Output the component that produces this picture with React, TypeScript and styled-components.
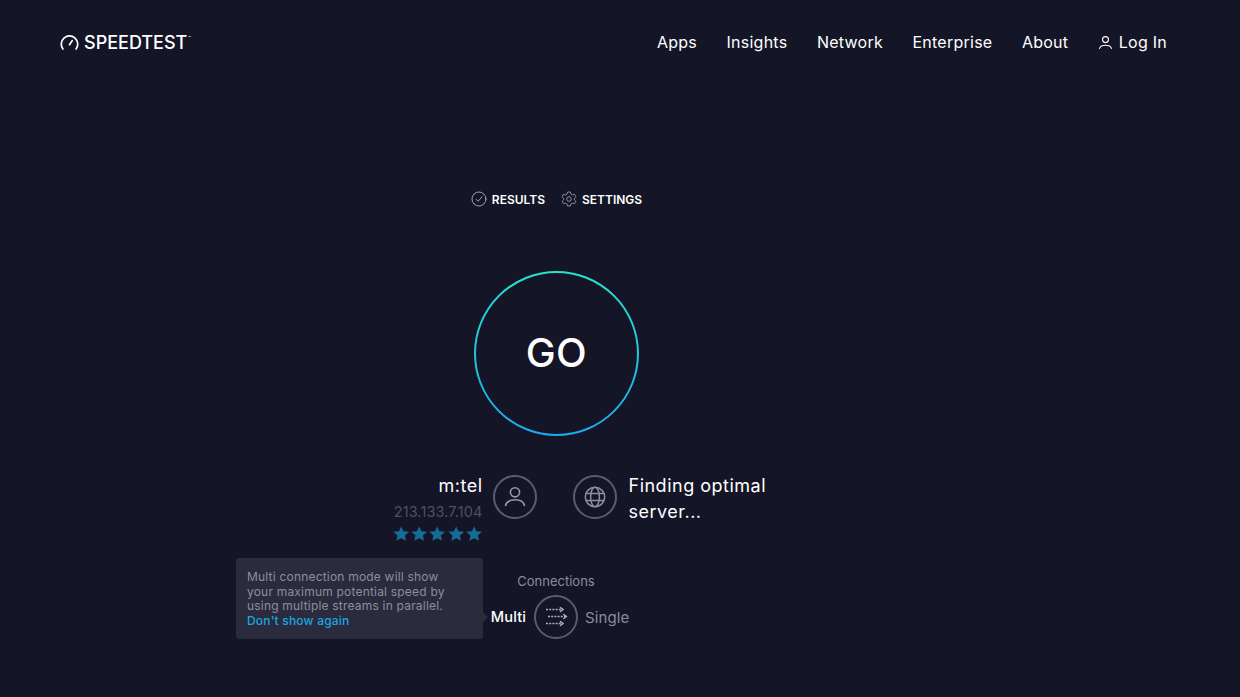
import React from 'react';
import styled, { createGlobalStyle } from 'styled-components';

const GlobalStyle = createGlobalStyle`
  html, body {
    margin: 0;
    padding: 0;
    height: 100%;
    background: #141526;
    overflow: hidden;
  }
  body {
    font-family: 'Inter', 'Liberation Sans', sans-serif;
    color: #fff;
  }
`;

const Page = styled.div`
  height: 697px;
  background: #141526;
`;

const Header = styled.header`
  height: 84px;
  padding: 0 73px 0 60px;
  display: flex;
  align-items: center;
  justify-content: space-between;
`;

const Logo = styled.a`
  display: flex;
  align-items: center;
  gap: 5px;
  color: #fff;
  font-size: 18px;
  font-weight: 500;
`;

const Trademark = styled.sup`
  font-size: 4px;
  margin-left: 1px;
  position: relative;
  top: -3px;
`;

const Nav = styled.nav`
  display: flex;
  align-items: center;
  gap: 29.5px;
`;

const NavLink = styled.a`
  display: flex;
  align-items: center;
  gap: 6px;
  color: #fff;
  font-size: 16px;
  font-weight: 400;
  letter-spacing: 0.25px;
`;

const Main = styled.main`
  width: 1112px;
  display: flex;
  flex-direction: column;
  align-items: center;
  padding-top: 105px;
`;

const Tabs = styled.div`
  height: 20px;
  margin-left: 1px;
  display: flex;
  align-items: center;
  gap: 16px;
`;

const Tab = styled.div`
  display: flex;
  align-items: center;
  gap: 5px;
  font-size: 12px;
  font-weight: 600;
  color: #fff;
`;

const GoButton = styled.button`
  position: relative;
  width: 165px;
  height: 165px;
  margin: 62px 0 0 1px;
  padding: 0 0 2px;
  border: 0;
  background: none;
  color: #fff;
  font-family: inherit;
  font-size: 40px;
  font-weight: 500;
  letter-spacing: 0.5px;
  display: flex;
  align-items: center;
  justify-content: center;
`;

const Ring = styled.svg`
  position: absolute;
  inset: 0;
`;

const InfoRow = styled.div`
  margin: 39px 0 0 -3px;
  display: grid;
  grid-template-columns: 240px 240px;
  column-gap: 36px;
`;

const InfoSide = styled.div<{ $right?: boolean }>`
  display: flex;
  align-items: flex-start;
  gap: 11px;
  justify-content: ${({ $right }) => ($right ? 'flex-start' : 'flex-end')};
`;

const IconCircle = styled.div`
  flex: none;
  width: 44px;
  height: 44px;
  box-sizing: border-box;
  border: 2px solid #5c5d6b;
  border-radius: 50%;
  display: flex;
  align-items: center;
  justify-content: center;
`;

const IspBlock = styled.div`
  display: flex;
  flex-direction: column;
  align-items: flex-end;
  margin: -2px -1px 0 0;
`;

const InfoTitle = styled.div`
  font-size: 18px;
  line-height: 26px;
  letter-spacing: 0.5px;
  font-weight: 400;
  color: #fff;
`;

const IpAddress = styled.div`
  font-size: 14.5px;
  line-height: 18px;
  letter-spacing: 0.1px;
  margin-top: 4px;
  color: #4f5060;
`;

const Stars = styled.div`
  display: flex;
  gap: 2px;
  margin-top: 5px;
  color: #166c97;
`;

const ServerText = styled.div`
  width: 150px;
  margin: -2px 0 0 1px;
  font-size: 18px;
  line-height: 26px;
  letter-spacing: 0.5px;
  color: #fff;
`;

const Connections = styled.div`
  position: relative;
  margin-top: 32px;
  width: 240px;
  display: flex;
  flex-direction: column;
  align-items: center;
`;

const ConnectionsLabel = styled.div`
  font-size: 13px;
  line-height: 16px;
  color: #8b8c9e;
`;

const Toggle = styled.div`
  margin-top: 6px;
  display: grid;
  grid-template-columns: 1fr auto 1fr;
  column-gap: 8px;
  align-items: center;
  width: 100%;
`;

const ToggleLabel = styled.div<{ $active?: boolean; $right?: boolean }>`
  font-size: ${({ $active }) => ($active ? '14.6px' : '15px')};
  letter-spacing: 0.1px;
  font-weight: ${({ $active }) => ($active ? 500 : 400)};
  color: ${({ $active }) => ($active ? '#fff' : '#8b8c9e')};
  text-align: ${({ $right }) => ($right ? 'left' : 'right')};
  margin-left: ${({ $right }) => ($right ? '-1px' : '0')};
`;

const Tooltip = styled.div`
  position: absolute;
  top: -15px;
  right: 193px;
  width: 247px;
  height: 81px;
  box-sizing: border-box;
  padding: 12px 25px 10px 11px;
  background: #2a2b3d;
  border-radius: 3px;
  font-size: 12px;
  letter-spacing: 0.2px;
  line-height: 14.7px;
  color: #8d8e9c;

  &::after {
    content: '';
    position: absolute;
    right: -5px;
    top: 54px;
    width: 0;
    height: 0;
    border-top: 5px solid transparent;
    border-bottom: 5px solid transparent;
    border-left: 5px solid #2a2b3d;
  }
`;

const TooltipLink = styled.a`
  display: block;
  color: #1ba6e0;
  font-weight: 500;
`;

const LogoIcon = () => (
  <svg width="19" height="15" viewBox="0 0 19 15" fill="none" stroke="#fff" strokeWidth="1.7" strokeLinecap="round">
    <path d="M2.9 14 A8.2 8.2 0 1 1 16.1 14" />
    <path d="M9.5 9.7 L12.3 5.6" />
  </svg>
);

const UserSmall = () => (
  <svg width="15" height="15" viewBox="0 0 15 15" fill="none" stroke="#fff" strokeWidth="1.1" strokeLinecap="round">
    <circle cx="7.5" cy="4.6" r="3" />
    <path d="M1.5 13.4 C2.4 10.8 5 10.3 7.5 10.3 C10 10.3 12.6 10.8 13.5 13.4" />
  </svg>
);

const CheckIcon = () => (
  <svg width="16" height="16" viewBox="0 0 16 16" fill="none" stroke="#a3a4b0" strokeWidth="1" strokeLinecap="round" strokeLinejoin="round">
    <circle cx="8" cy="8" r="7" />
    <path d="M5.2 8.4 L7.2 10.3 L10.9 5.9" />
  </svg>
);

const GearIcon = () => (
  <svg width="16" height="16" viewBox="0 0 16 16" fill="none" stroke="#8b8c9a" strokeWidth="1" strokeLinejoin="round">
    <path d="M6.6 1 H9.4 L9.9 3 L11.5 3.9 L13.5 3.3 L14.9 5.7 L13.4 7.1 V8.9 L14.9 10.3 L13.5 12.7 L11.5 12.1 L9.9 13 L9.4 15 H6.6 L6.1 13 L4.5 12.1 L2.5 12.7 L1.1 10.3 L2.6 8.9 V7.1 L1.1 5.7 L2.5 3.3 L4.5 3.9 L6.1 3 Z" />
    <circle cx="8" cy="8" r="2.3" />
  </svg>
);

const UserIcon = () => (
  <svg width="24" height="24" viewBox="0 0 24 24" fill="none" stroke="#9a9ba9" strokeWidth="1.6" strokeLinecap="round">
    <circle cx="12" cy="7.3" r="4.6" />
    <path d="M2.5 20.5 C3.5 16.5 8 14.8 12 14.8 C16 14.8 20.5 16.5 21.5 20.5" />
  </svg>
);

const GlobeIcon = () => (
  <svg width="22" height="22" viewBox="0 0 22 22" fill="none" stroke="#8e8f9e" strokeWidth="1.5">
    <circle cx="11" cy="11" r="9.7" />
    <ellipse cx="11" cy="11" rx="4.4" ry="9.7" />
    <path d="M2 7.6 H20 M2 14.4 H20" />
  </svg>
);

const StreamsIcon = () => (
  <svg width="24" height="20" viewBox="0 0 24 20" fill="none" stroke="#b0b1bc" strokeWidth="1.4" strokeLinecap="round" strokeLinejoin="round">
    <path d="M2 2.5 H18" strokeDasharray="2 1.2" strokeLinecap="butt" />
    <path d="M16.4 0.6 L19.2 2.5 L16.4 4.4" />
    <path d="M4 9.5 H21.5" strokeDasharray="2 1.2" strokeLinecap="butt" />
    <path d="M19.8 7.6 L22.6 9.5 L19.8 11.4" />
    <path d="M2 16.5 H18" strokeDasharray="2 1.2" strokeLinecap="butt" />
    <path d="M16.4 14.6 L19.2 16.5 L16.4 18.4" />
  </svg>
);

const StarIcon = () => (
  <svg width="16.4" height="15" viewBox="0 0 24 22" fill="currentColor">
    <path d="M12 0.5 L15.2 7.8 L23.5 8.6 L17.4 14 L19.1 21.8 L12 17.8 L4.9 21.8 L6.6 14 L0.5 8.6 L8.8 7.8 Z" />
  </svg>
);

const navItems = ['Apps', 'Insights', 'Network', 'Enterprise', 'About'];

export default function App() {
  return (
    <Page>
      <GlobalStyle />
      <Header>
        <Logo>
          <LogoIcon />
          <span>SPEEDTEST<Trademark>™</Trademark></span>
        </Logo>
        <Nav>
          {navItems.map((item) => (
            <NavLink key={item}>{item}</NavLink>
          ))}
          <NavLink>
            <UserSmall />
            Log In
          </NavLink>
        </Nav>
      </Header>
      <Main>
        <Tabs>
          <Tab>
            <CheckIcon />
            RESULTS
          </Tab>
          <Tab>
            <GearIcon />
            SETTINGS
          </Tab>
        </Tabs>
        <GoButton>
          <Ring width="165" height="165" viewBox="0 0 165 165" fill="none">
            <defs>
              <linearGradient id="ring" x1="0" y1="0" x2="0" y2="1">
                <stop offset="0" stopColor="#26e2cc" />
                <stop offset="1" stopColor="#1fa8ec" />
              </linearGradient>
            </defs>
            <circle cx="82.5" cy="82.5" r="81.5" stroke="url(#ring)" strokeWidth="2" />
          </Ring>
          GO
        </GoButton>
        <InfoRow>
          <InfoSide>
            <IspBlock>
              <InfoTitle>m:tel</InfoTitle>
              <IpAddress>213.133.7.104</IpAddress>
              <Stars>
                {[0, 1, 2, 3, 4].map((i) => (
                  <StarIcon key={i} />
                ))}
              </Stars>
            </IspBlock>
            <IconCircle>
              <UserIcon />
            </IconCircle>
          </InfoSide>
          <InfoSide $right>
            <IconCircle>
              <GlobeIcon />
            </IconCircle>
            <ServerText>Finding optimal server...</ServerText>
          </InfoSide>
        </InfoRow>
        <Connections>
          <ConnectionsLabel>Connections</ConnectionsLabel>
          <Toggle>
            <ToggleLabel $active>Multi</ToggleLabel>
            <IconCircle>
              <StreamsIcon />
            </IconCircle>
            <ToggleLabel $right>Single</ToggleLabel>
          </Toggle>
          <Tooltip>
            Multi connection mode will show your maximum potential speed by using multiple streams in parallel.
            <TooltipLink>Don't show again</TooltipLink>
          </Tooltip>
        </Connections>
      </Main>
    </Page>
  );
}
